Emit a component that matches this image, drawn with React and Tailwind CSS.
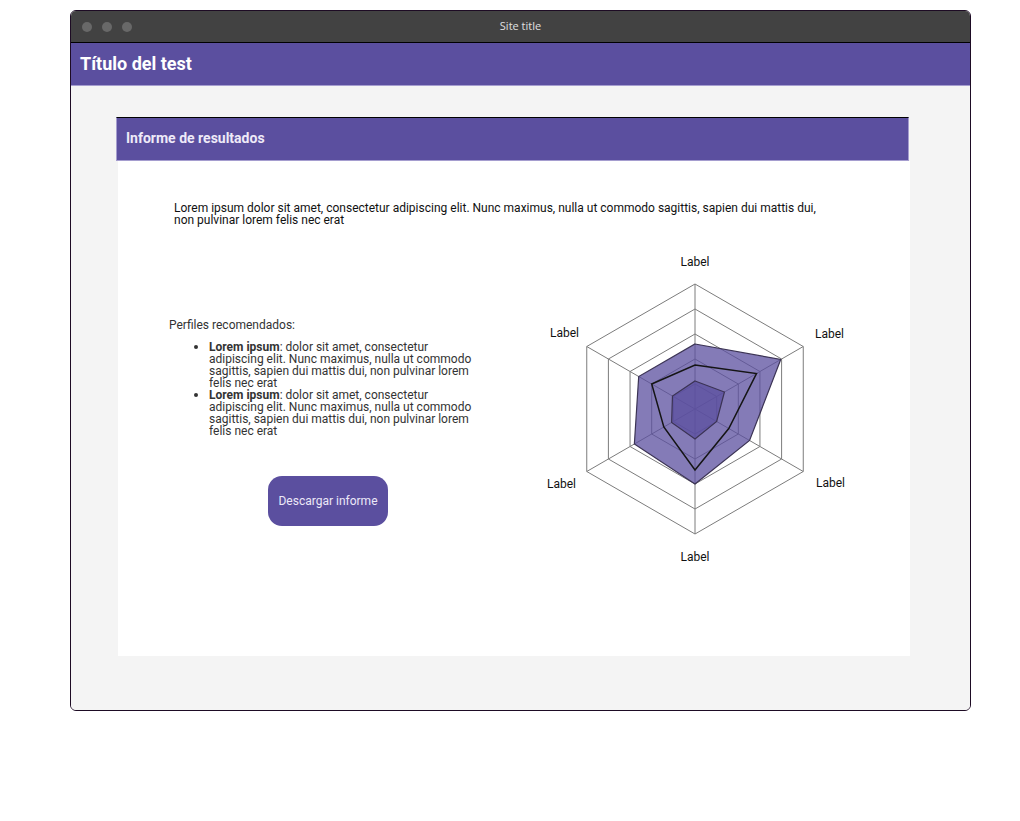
import React from "react";

const C = 160;
const ang = (i) => ((-90 + 60 * i) * Math.PI) / 180;
const pts = (vals) =>
  vals
    .map((r, i) => `${(C + r * Math.cos(ang(i))).toFixed(2)},${(C + r * Math.sin(ang(i))).toFixed(2)}`)
    .join(" ");

function Radar() {
  const rings = [25, 50, 75, 100, 125];
  return (
    <svg width="320" height="320" viewBox="0 0 320 320" className="shrink-0">
      {rings.map((r) => (
        <polygon key={r} points={pts([r, r, r, r, r, r])} fill="none" stroke="#7c7c7c" strokeWidth="1" />
      ))}
      {[0, 1, 2, 3, 4, 5].map((i) => (
        <line
          key={i}
          x1={C}
          y1={C}
          x2={C + 125 * Math.cos(ang(i))}
          y2={C + 125 * Math.sin(ang(i))}
          stroke="#7c7c7c"
          strokeWidth="1"
        />
      ))}
      <polygon points={pts([65, 99, 63, 75, 70, 65])} fill="rgba(91,79,159,0.75)" stroke="#3b3354" strokeWidth="1.2" />
      <polygon points={pts([28, 34, 25, 30, 27, 26])} fill="rgba(91,79,159,0.75)" stroke="#3b3354" strokeWidth="1.2" />
      <polygon points={pts([44, 71, 39, 61, 36, 50])} fill="none" stroke="#151515" strokeWidth="1.5" />
      <g fontFamily="Roboto, sans-serif" fontSize="12" fill="#111">
        <text x="160" y="17" textAnchor="middle">Label</text>
        <text x="280" y="89">Label</text>
        <text x="281" y="238">Label</text>
        <text x="160" y="312" textAnchor="middle">Label</text>
        <text x="41" y="239" textAnchor="end">Label</text>
        <text x="44" y="88" textAnchor="end">Label</text>
      </g>
    </svg>
  );
}

function Item() {
  return (
    <li className="flex">
      <span className="w-[15px] shrink-0 pt-[4px]">
        <span className="block w-[4px] h-[4px] rounded-full bg-[#333]" />
      </span>
      <span className="w-[268px]">
        <b className="font-bold">Lorem ipsum</b>: dolor sit amet, consectetur adipiscing elit. Nunc maximus, nulla ut
        commodo sagittis, sapien dui mattis dui, non pulvinar lorem felis nec erat
      </span>
    </li>
  );
}

export default function App() {
  return (
    <div className="w-[1020px] h-[821px] bg-white pt-[10px] pl-[70px]" style={{ fontFamily: "Roboto, 'Liberation Sans', sans-serif" }}>
      <div className="w-[901px] h-[701px] border border-[#1d0b24] rounded-[6px] overflow-hidden flex flex-col">
        <div className="h-[32px] shrink-0 bg-[#424242] border-b border-black grid grid-cols-[1fr_auto_1fr] items-center">
          <div className="flex gap-[10px] pl-[11px]">
            <span className="w-[10px] h-[10px] rounded-full bg-[#686868]" />
            <span className="w-[10px] h-[10px] rounded-full bg-[#686868]" />
            <span className="w-[10px] h-[10px] rounded-full bg-[#686868]" />
          </div>
          <div className="text-[11px] text-[#e0e0e0]" style={{ fontFamily: "'Open Sans', sans-serif" }}>Site title</div>
          <div />
        </div>
        <div className="h-[43px] shrink-0 bg-[#5b4f9f] border-b border-[#a59dcf] flex items-center pl-[9px] pb-[2px]">
          <h1 className="text-[18px] font-bold text-white">Título del test</h1>
        </div>
        <div className="flex-1 bg-[#f4f4f4] pt-[31px] pl-[45px]">
          <div className="w-[793px] h-[44px] bg-[#5b4f9f] border-t border-t-black border-l border-r border-b border-l-[#a59dcf] border-r-[#a59dcf] border-b-[#a59dcf] flex items-center pl-[9px] pb-[2px]">
            <h2 className="text-[14px] font-bold text-[#eeeaf8]">Informe de resultados</h2>
          </div>
          <div className="ml-[2px] w-[792px] h-[495px] bg-white pt-[41px]">
            <p className="ml-[56px] w-[650px] text-[12px] leading-[12px] text-[#111]">
              Lorem ipsum dolor sit amet, consectetur adipiscing elit. Nunc maximus, nulla ut commodo sagittis, sapien dui
              mattis dui, non pulvinar lorem felis nec erat
            </p>
            <div className="flex mt-[23px]">
              <div className="w-[417px] shrink-0 flex flex-col text-[12px] leading-[12px] text-[#333]">
                <div className="mt-[70px] ml-[51px]">Perfiles recomendados:</div>
                <ul className="mt-[10px] ml-[76px] flex flex-col">
                  <Item />
                  <Item />
                </ul>
                <button className="mt-[39px] ml-[150px] w-[120px] h-[50px] rounded-[14px] bg-[#5b4f9f] text-[12px] text-[#ece8f8]">
                  Descargar informe
                </button>
              </div>
              <Radar />
            </div>
          </div>
        </div>
      </div>
    </div>
  );
}
